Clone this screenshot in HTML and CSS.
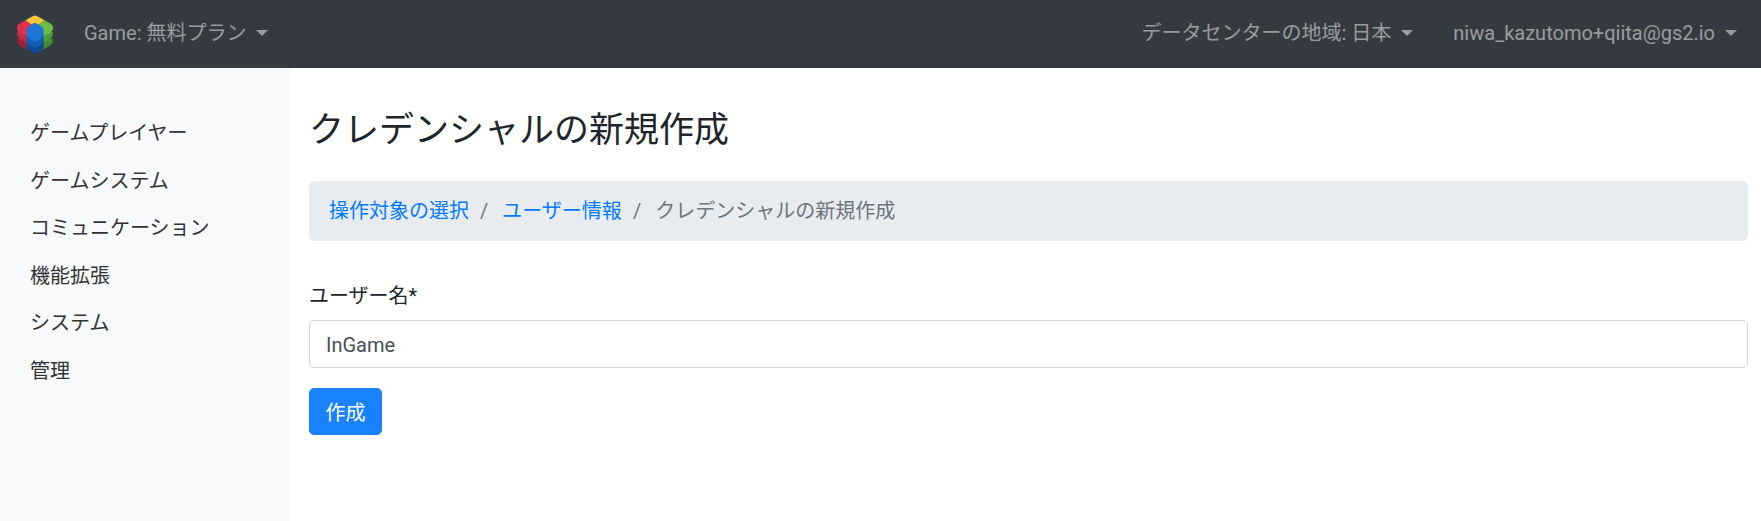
FILE: index.html
```html
<!DOCTYPE html>
<html lang="ja">
<head>
<meta charset="utf-8">
<title>クレデンシャルの新規作成</title>
<link rel="stylesheet" href="styles.css">
</head>
<body>
<header class="navbar">
  <a class="brand" href="#" aria-label="GS2">
    <svg class="logo" viewBox="0 0 40 40" width="38" height="39">
      <path fill="#9c2338" d="M1 25 20 14v26L6 33q-5-3-5-8z"/>
      <path fill="#3f8a33" d="M39 25 20 14v26l14-7q5-3 5-8z"/>
      <path fill="#c22a45" d="M1 18 20 8v24L6 26q-5-3-5-8z"/>
      <path fill="#4f9c3c" d="M39 18 20 8v24l14-6q5-3 5-8z"/>
      <path fill="#e0314f" d="M1 12q0-2 2-3l7-4 10 7v13L5 19q-4-2-4-7z"/>
      <path fill="#6cbb47" d="M39 12q0-2-2-3l-7-4-10 7v13l15-6q4-2 4-7z"/>
      <path fill="#f6c93c" d="M20 0q1 0 2 .5L30 5 20 12 10 5 18 .5q1-.5 2-.5z"/>
      <path fill="#0d4a94" d="M11 27q0-2 2-3l7-5 7 5q2 1 2 3v6q0 2-2 3l-5 3.500q-2 .500-4 0l-5-3.500q-2-1-2-3z"/>
      <path fill="#135eb3" d="M11 21q0-2 2-3l7-5 7 5q2 1 2 3v6q0 2-2 3l-5 3.500q-2 .500-4 0l-5-3.500q-2-1-2-3z"/>
      <path fill="#1b76d6" d="M11 15q0-2 2-3l5-3.500q2-1 4 0l5 3.500q2 1 2 3v5q0 2-2 3l-5 4q-2 1-4 0l-5-4q-2-1-2-3z"/>
    </svg>
  </a>
  <a class="nav-toggle" href="#">Game: 無料プラン<span class="caret"></span></a>
  <div class="nav-right">
    <a class="nav-toggle" href="#">データセンターの地域: 日本<span class="caret"></span></a>
    <a class="nav-toggle" href="#">niwa_kazutomo+qiita@gs2.io<span class="caret"></span></a>
  </div>
</header>
<div class="layout">
  <nav class="sidebar">
    <a class="side-link" href="#">ゲームプレイヤー</a>
    <a class="side-link" href="#">ゲームシステム</a>
    <a class="side-link" href="#">コミュニケーション</a>
    <a class="side-link" href="#">機能拡張</a>
    <a class="side-link" href="#">システム</a>
    <a class="side-link" href="#">管理</a>
  </nav>
  <main class="content">
    <h1 class="title">クレデンシャルの新規作成</h1>
    <ol class="breadcrumb">
      <li class="crumb"><a href="#">操作対象の選択</a></li>
      <li class="crumb crumb-next"><a href="#">ユーザー情報</a></li>
      <li class="crumb crumb-next crumb-active">クレデンシャルの新規作成</li>
    </ol>
    <form class="form">
      <label class="label" for="username">ユーザー名*</label>
      <input class="input" id="username" type="text" value="InGame">
      <button class="button" type="button">作成</button>
    </form>
  </main>
</div>
</body>
</html>
```
FILE: styles.css
```css
* { box-sizing: border-box; }
html { font-size: 20px; }
body {
  margin: 0;
  height: 521px;
  overflow: hidden;
  display: flex;
  flex-direction: column;
  font-family: Roboto, "Noto Sans CJK JP", sans-serif;
  font-size: 20px;
  font-weight: 400;
  line-height: 30px;
  color: #212529;
  background: #fff;
}
a { text-decoration: none; }
.navbar {
  flex: none;
  height: 68px;
  display: flex;
  align-items: center;
  padding: 0 24px 0 16px;
  background: #343a40;
}
.brand { display: flex; margin-right: 30px; }
.logo { display: block; }
.nav-toggle {
  display: flex;
  align-items: center;
  padding-bottom: 3px;
  color: rgba(255, 255, 255, .5);
  white-space: nowrap;
}
.caret {
  margin-left: 10px;
  border-top: 6px solid currentColor;
  border-left: 6px solid transparent;
  border-right: 6px solid transparent;
}
.nav-right { margin-left: auto; display: flex; gap: 40px; }
.layout { flex: 1; display: flex; min-height: 0; }
.sidebar {
  flex: none;
  width: 290px;
  padding-top: 41px;
  display: flex;
  flex-direction: column;
  background: #f8f9fa;
}
.side-link {
  padding: 9px 30px;
  height: 47.6px;
  color: #333;
}
.content { flex: 1; min-width: 0; padding: 42px 13px 0 19px; }
.title {
  margin: 0 0 29px;
  font-size: 35px;
  font-weight: 400;
  line-height: 42px;
}
.breadcrumb {
  margin: 0 0 40px;
  padding: 15px 20px;
  display: flex;
  list-style: none;
  border-radius: 5px;
  background: #e9ecef;
}
.crumb a { color: #007bff; }
.crumb-next { padding-left: 11px; }
.crumb-next::before { content: "/"; padding-right: 14px; color: #6c757d; }
.crumb-active { color: #6c757d; }
.form { display: flex; flex-direction: column; align-items: flex-start; }
.label { margin-bottom: 9px; }
.input {
  width: 100%;
  height: 48px;
  padding: 9px 16px 7px;
  margin-bottom: 20px;
  font: inherit;
  color: #495057;
  background: #fff;
  border: 1px solid #ced4da;
  border-radius: 5px;
}
.button {
  height: 47px;
  padding: 2px 15.5px 0;
  font: inherit;
  color: #fff;
  background: #1a82ff;
  border: 1px solid #1a82ff;
  border-radius: 5px;
}
```
